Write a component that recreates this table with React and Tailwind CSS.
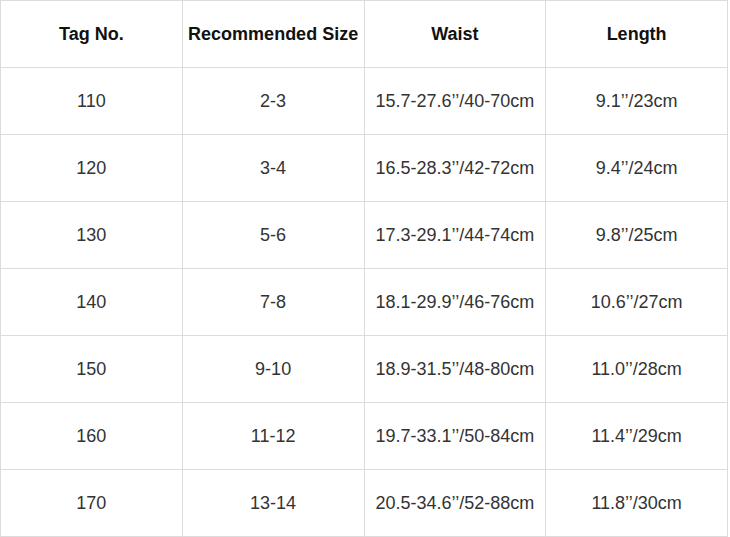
import React from "react"

const rows = [
  ["110", "2-3", "15.7-27.6’’/40-70cm", "9.1’’/23cm"],
  ["120", "3-4", "16.5-28.3’’/42-72cm", "9.4’’/24cm"],
  ["130", "5-6", "17.3-29.1’’/44-74cm", "9.8’’/25cm"],
  ["140", "7-8", "18.1-29.9’’/46-76cm", "10.6’’/27cm"],
  ["150", "9-10", "18.9-31.5’’/48-80cm", "11.0’’/28cm"],
  ["160", "11-12", "19.7-33.1’’/50-84cm", "11.4’’/29cm"],
  ["170", "13-14", "20.5-34.6’’/52-88cm", "11.8’’/30cm"],
]

const headers = ["Tag No.", "Recommended Size", "Waist", "Length"]

export default function App() {
  return (
    <div className="w-[730px] h-[537px] bg-white font-['Liberation_Sans',Arial,sans-serif]">
      <table className="w-[728px] table-fixed border-collapse text-[18px]">
        <thead>
          <tr className="h-[67px]">
            {headers.map((h) => (
              <th key={h} className="border border-[#dcdcdc] p-0 text-center font-bold text-[#111111]">
                {h}
              </th>
            ))}
          </tr>
        </thead>
        <tbody>
          {rows.map((r) => (
            <tr key={r[0]} className="h-[67px]">
              {r.map((c, i) => (
                <td key={i} className="border border-[#dcdcdc] p-0 text-center text-[#333333]">
                  {c}
                </td>
              ))}
            </tr>
          ))}
        </tbody>
      </table>
    </div>
  )
}
